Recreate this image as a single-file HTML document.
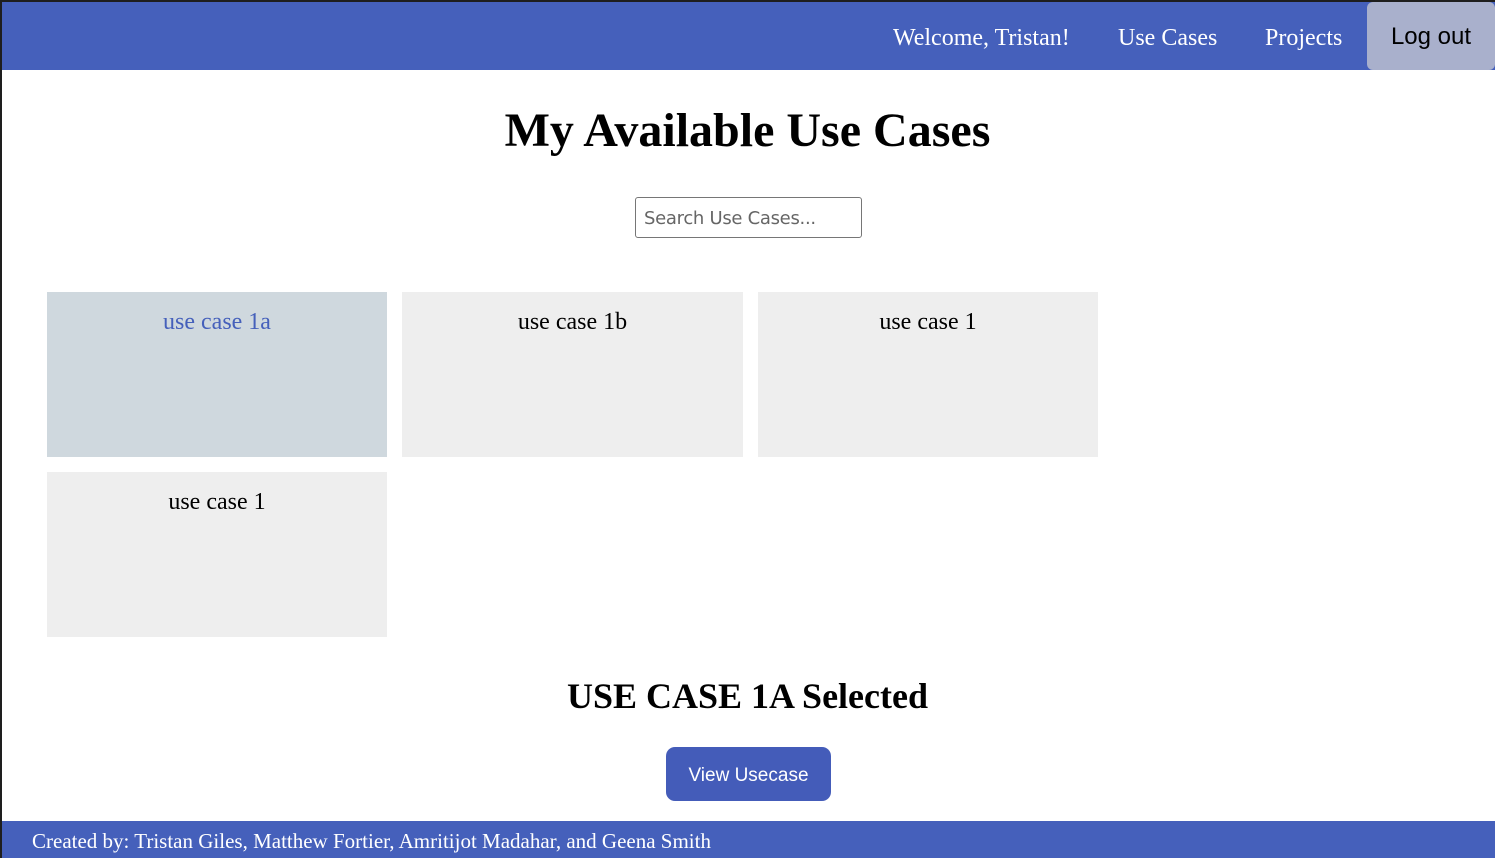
<!DOCTYPE html>
<html><head><style>
html,body{margin:0;padding:0;}
body{width:1495px;height:858px;position:relative;overflow:hidden;background:#fff;font-family:"Liberation Serif",serif;}
.frame{position:absolute;left:0;top:0;width:1495px;height:858px;box-sizing:border-box;border-left:2px solid #1e1e1e;border-top:2px solid #1e1e1e;}
.hdr{position:absolute;left:2px;top:2px;width:1493px;height:68px;background:#4560bb;}
.nav{position:absolute;top:24px;color:#fff;font-size:24px;line-height:28px;}
.logout{position:absolute;left:1367px;top:2px;width:128px;height:68px;background:#a9b0cc;border-radius:6px;font-family:"Liberation Sans",sans-serif;font-size:24px;color:#000;text-align:center;line-height:70px;}
h1{position:absolute;left:0;width:1495px;top:104px;margin:0;text-align:center;font-size:48px;font-weight:bold;line-height:54px;}
.search{position:absolute;left:635px;top:197px;width:227px;height:41px;border:1px solid #767676;border-radius:3px;box-sizing:border-box;font-family:"DejaVu Sans",sans-serif;font-size:18px;color:#666;padding-left:8px;line-height:41px;letter-spacing:-0.3px;}
.card{position:absolute;width:340px;height:165px;background:#eee;text-align:center;font-size:24px;line-height:28px;padding-top:16px;box-sizing:border-box;}
h2{position:absolute;left:0;width:1495px;top:675px;margin:0;text-align:center;font-size:36px;font-weight:bold;line-height:42px;}
.btn{position:absolute;left:666px;top:747px;width:165px;height:54px;background:#445cb9;border-radius:9px;color:#fff;font-family:"Liberation Sans",sans-serif;font-size:19px;text-align:center;line-height:58px;}
.ftr{position:absolute;left:2px;top:821px;width:1493px;height:37px;background:#4560bb;color:#fff;font-size:21px;line-height:40px;padding-left:30px;box-sizing:border-box;}
</style></head><body>
<div class="frame"></div>
<div class="hdr"></div>
<div class="nav" style="left:893px">Welcome, Tristan!</div>
<div class="nav" style="left:1118px">Use Cases</div>
<div class="nav" style="left:1265px">Projects</div>
<div class="logout">Log out</div>
<h1>My Available Use Cases</h1>
<div class="search">Search Use Cases...</div>
<div class="card" style="left:47px;top:292px;background:#cfd8de;color:#4560bb">use case 1a</div>
<div class="card" style="left:402px;top:292px;width:341px">use case 1b</div>
<div class="card" style="left:758px;top:292px">use case 1</div>
<div class="card" style="left:47px;top:472px">use case 1</div>
<h2>USE CASE 1A Selected</h2>
<div class="btn">View Usecase</div>
<div class="ftr">Created by: Tristan Giles, Matthew Fortier, Amritijot Madahar, and Geena Smith</div>
</body></html>
